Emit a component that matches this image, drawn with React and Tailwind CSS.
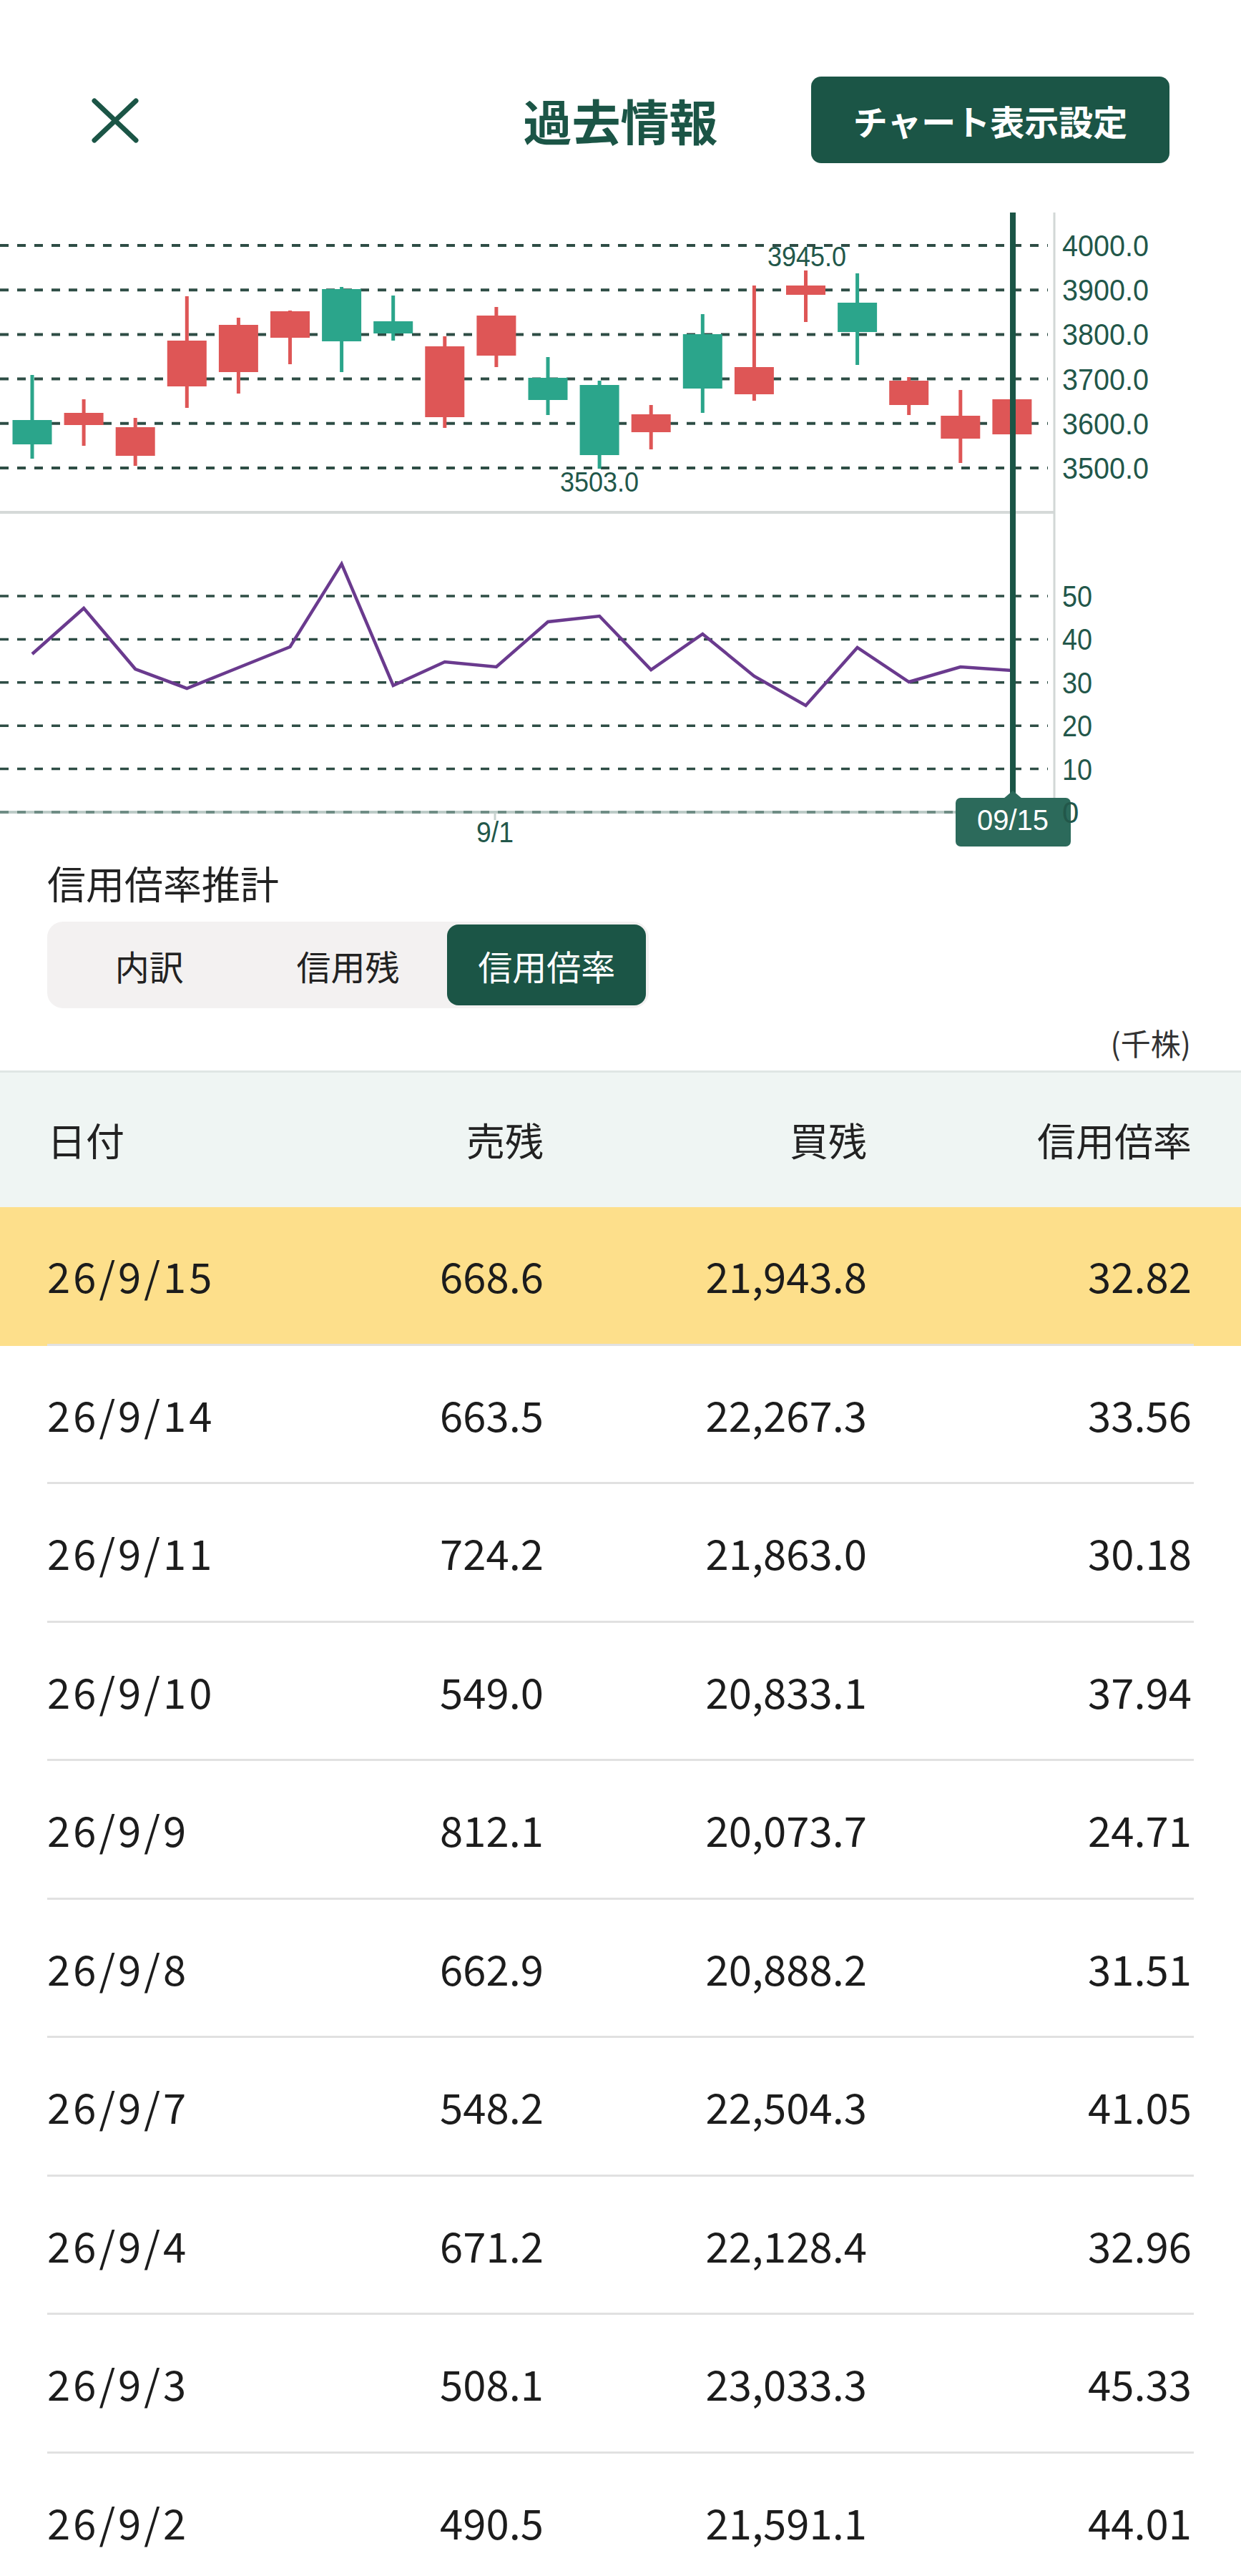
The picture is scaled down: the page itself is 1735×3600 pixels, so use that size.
import React from 'react';

const GREEN = '#1b5546';
const UP = '#2ba58b';
const DOWN = '#de5656';
const GRID = '#2e4d45';
const LABEL = '#22574a';

// [bodyTop, bodyBottom, wickTop, wickBottom, isUp]
const candles = [
    [587, 621, 524, 641, true],
    [577, 594, 558, 623, false],
    [597, 637, 584, 651, false],
    [476, 540, 414, 570, false],
    [454, 520, 444, 550, false],
    [435, 472, 434, 509, false],
    [404, 477, 401, 520, true],
    [449, 466, 413, 476, true],
    [484, 583, 470, 598, false],
    [441, 497, 429, 513, false],
    [528, 559, 499, 580, true],
    [538, 636, 532, 655, true],
    [579, 604, 566, 628, false],
    [467, 543, 439, 577, true],
    [513, 551, 399, 560, false],
    [399, 412, 378, 450, false],
    [423, 464, 382, 510, true],
    [532, 566, 527, 580, false],
    [581, 613, 545, 647, false],
    [558, 607, 558, 607, false],
];

const ratioLine = [914, 850, 935, 962, 933, 904, 788, 958, 925, 932, 869, 861, 936, 886, 945, 986, 905, 953, 932, 937];

const priceTicks = ['4000.0', '3900.0', '3800.0', '3700.0', '3600.0', '3500.0'];
const ratioTicks = ['50', '40', '30', '20', '10'];

const rows = [
    ['26/9/15', '668.6', '21,943.8', '32.82'],
    ['26/9/14', '663.5', '22,267.3', '33.56'],
    ['26/9/11', '724.2', '21,863.0', '30.18'],
    ['26/9/10', '549.0', '20,833.1', '37.94'],
    ['26/9/9', '812.1', '20,073.7', '24.71'],
    ['26/9/8', '662.9', '20,888.2', '31.51'],
    ['26/9/7', '548.2', '22,504.3', '41.05'],
    ['26/9/4', '671.2', '22,128.4', '32.96'],
    ['26/9/3', '508.1', '23,033.3', '45.33'],
    ['26/9/2', '490.5', '21,591.1', '44.01'],
];

const cx = (i) => 45 + i * 72.1;

const Chart = () => {
    const font = "'Liberation Sans', Arial, sans-serif";
    return (
        <svg className="block" width="1735" height="900" viewBox="0 290 1735 900">
            {/* price grid */}
            {priceTicks.map((t, i) => (
                <line key={t} x1="0" x2="1465" y1={343 + i * 62.2} y2={343 + i * 62.2} stroke={GRID} strokeWidth="4" strokeDasharray="12 12" />
            ))}
            {/* ratio grid */}
            {ratioTicks.map((t) => {
                const y = 1135 - Number(t) * 6.04;
                return <line key={t} x1="0" x2="1465" y1={y} y2={y} stroke={GRID} strokeWidth="3.5" strokeDasharray="12 12" />;
            })}
            <line x1="0" x2="1474" y1="1135" y2="1135" stroke="#bccbc7" strokeWidth="4" />
            <line x1="0" x2="1465" y1="1135" y2="1135" stroke="#6f8d85" strokeWidth="4" strokeDasharray="12 12" />

            {/* candles */}
            {candles.map(([bt, bb, wt, wb, up], i) => {
                const x = cx(i);
                const c = up ? UP : DOWN;
                return (
                    <g key={i}>
                        <rect x={x - 2.5} y={wt} width="5" height={wb - wt} fill={c} />
                        <rect x={x - 27.5} y={bt} width="55" height={Math.max(bb - bt, 3)} fill={c} />
                    </g>
                );
            })}
            <text x="1128" y="372" textAnchor="middle" fontSize="38" textLength="110" lengthAdjust="spacingAndGlyphs" fill={LABEL} fontFamily={font}>3945.0</text>
            <text x="838" y="687" textAnchor="middle" fontSize="38" textLength="110" lengthAdjust="spacingAndGlyphs" fill={LABEL} fontFamily={font}>3503.0</text>

            {/* ratio line */}
            <polyline
                points={ratioLine.map((y, i) => `${cx(i)},${y}`).join(' ')}
                fill="none"
                stroke="#6a3a8e"
                strokeWidth="4.5"
            />

            {/* panel separator + axis */}
            <line x1="0" x2="1474" y1="716" y2="716" stroke="#d5d9d8" strokeWidth="4" />
            <line x1="1474" x2="1474" y1="297" y2="1137" stroke="#d2d7d6" strokeWidth="3" />

            {/* labels */}
            {priceTicks.map((t, i) => (
                <text key={t} x="1485" y={343 + i * 62.2 + 15} fontSize="42" textLength="121" lengthAdjust="spacingAndGlyphs" fill={LABEL} fontFamily={font}>{t}</text>
            ))}
            {ratioTicks.map((t) => (
                <text key={t} x="1485" y={1135 - Number(t) * 6.04 + 15} fontSize="42" textLength="42" lengthAdjust="spacingAndGlyphs" fill={LABEL} fontFamily={font}>{t}</text>
            ))}

            <line x1="692" x2="692" y1="1136" y2="1146" stroke="#c9d3d0" strokeWidth="3" />
            <text x="692" y="1177" textAnchor="middle" fontSize="41" textLength="52" lengthAdjust="spacingAndGlyphs" fill={LABEL} fontFamily={font}>9/1</text>

            {/* cursor */}
            <line x1="1416" x2="1416" y1="297" y2="1110" stroke={GREEN} strokeWidth="8" />
            <rect x="1336" y="1115" width="161" height="68" rx="7" fill="#2c6a5b" />
            <polygon points="1403,1116 1416,1105 1429,1116" fill="#2c6a5b" />
            <text x="1416" y="1160" textAnchor="middle" fontSize="40" textLength="100" lengthAdjust="spacingAndGlyphs" fill="#ffffff" fontFamily={font}>09/15</text>
            <text x="1485" y="1150" fontSize="42" fill={LABEL} fontFamily={font}>0</text>
        </svg>
    );
};

const CloseIcon = () => (
    <svg width="68" height="68" viewBox="0 0 68 68" className="block">
        <path d="M5 7 L63 62 M63 7 L5 62" stroke={GREEN} strokeWidth="7" strokeLinecap="round" fill="none" />
    </svg>
);

const App = () => {
    return (
        <div className="w-[1735px] min-h-[3600px] bg-white font-['Noto_Sans_CJK_JP','Noto_Sans',sans-serif] text-[#1c1c1c] overflow-hidden">
            {/* header */}
            <div className="h-[290px] pt-[107px]">
                <div className="grid grid-cols-[1fr_auto_1fr] items-center h-[121px]">
                    <div className="pl-[127px]">
                        <CloseIcon />
                    </div>
                    <div className="text-[68px] font-bold leading-none text-[#1b5546]">過去情報</div>
                    <div className="flex justify-end pr-[100px]">
                        <button className="w-[501px] h-[121px] rounded-[14px] bg-[#1b5546] text-white text-[48px] font-bold leading-none">
                            チャート表示設定
                        </button>
                    </div>
                </div>
            </div>

            <Chart />

            <div className="h-[88px] flex items-center pl-[66px] text-[54px] leading-none text-[#222]">信用倍率推計</div>

            <div className="mt-[10px] ml-[66px] w-[841px] h-[121px] rounded-[22px] bg-[#f3f1f1] p-[4px] grid grid-cols-3">
                <div className="flex items-center justify-center text-[48px] leading-none text-[#222]">内訳</div>
                <div className="flex items-center justify-center text-[48px] leading-none text-[#222]">信用残</div>
                <div className="flex items-center justify-center rounded-[16px] bg-[#1b5546] text-[48px] leading-none text-white">信用倍率</div>
            </div>

            <div className="h-[87px] pt-[8px] flex items-center justify-end pr-[70px] text-[42px] leading-none text-[#333]">(千株)</div>

            {/* table header */}
            <div className="h-[191px] bg-[#eff5f3] border-t-[3px] border-[#dfe6e4]">
                <div className="mx-[66px] h-full grid grid-cols-[300px_394px_452px_454px] items-center text-[54px] leading-none text-[#222]">
                    <div>日付</div>
                    <div className="text-right">売残</div>
                    <div className="text-right">買残</div>
                    <div className="text-right">信用倍率</div>
                </div>
            </div>

            {rows.map((r, i) => (
                <div key={r[0]} className={i === 0 ? 'bg-[#fddf8b]' : 'bg-white'}>
                    <div className="mx-[66px] h-[193.5px] border-b-[3px] border-[#e1e1e1] grid grid-cols-[300px_394px_452px_454px] items-center text-[58px] leading-none">
                        <div className="tracking-[4px]">{r[0]}</div>
                        <div className="text-right">{r[1]}</div>
                        <div className="text-right">{r[2]}</div>
                        <div className="text-right">{r[3]}</div>
                    </div>
                </div>
            ))}
        </div>
    );
};

export default App;
